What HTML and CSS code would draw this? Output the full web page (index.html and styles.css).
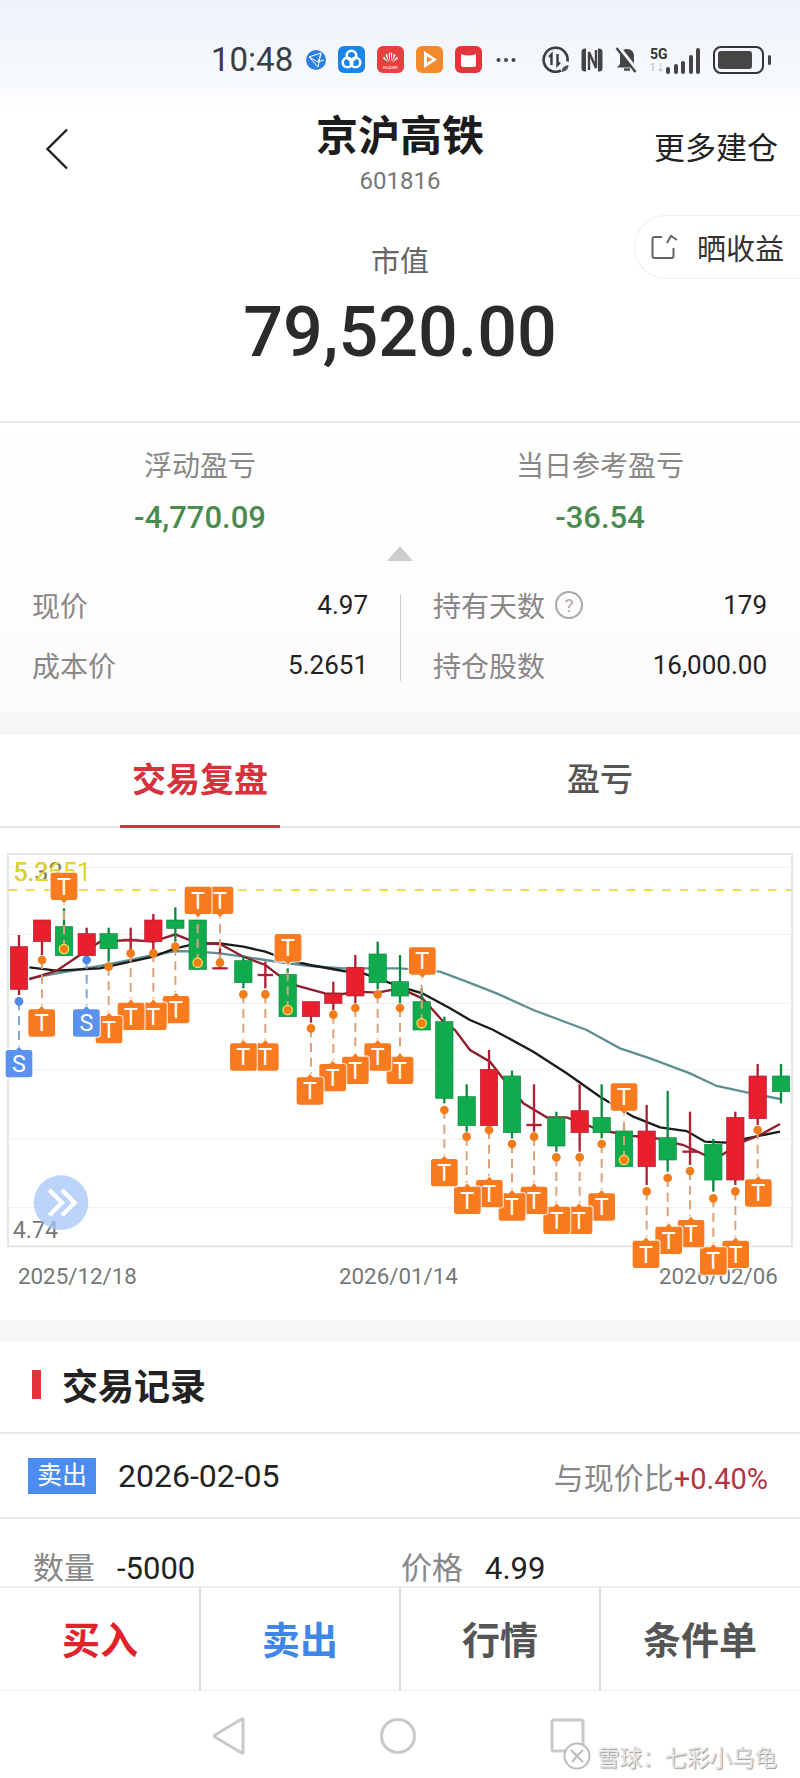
FILE: index.html
```html
<!DOCTYPE html>
<html lang="zh-CN">
<head>
    <meta charset="UTF-8">
    <meta name="viewport" content="width=device-width, initial-scale=1.0">
    <title>京沪高铁</title>
    <link rel="stylesheet" href="styles.css">
</head>
<body>
<div class="page">
    <div class="status">
        <span class="time">10:48</span>
        <div class="status-apps">
            <svg width="20" height="20" viewBox="0 0 20 20"><circle cx="10" cy="10" r="10" fill="#2f7fe0"/><path d="M3 7l12-4-3 14zM3 7l9 5 3-9M12 12l6-2" fill="none" stroke="#fff" stroke-width="1"/></svg>
            <svg width="27" height="27" viewBox="0 0 27 27"><rect width="27" height="27" rx="6" fill="#1a84e8"/><g fill="none" stroke="#fff" stroke-width="2.6"><circle cx="13.5" cy="9.5" r="4.8"/><circle cx="9.5" cy="16.5" r="4.8"/><circle cx="17.5" cy="16.5" r="4.8"/></g></svg>
            <svg width="27" height="27" viewBox="0 0 27 27"><rect width="27" height="27" rx="6" fill="#e8403f"/><g fill="#fff"><path d="M13 16l-1.4-8 1.4-2zM14 16l1.4-8-1.4-2zM12 16l-3.6-6.5 1.6-2zM15 16l3.6-6.5-1.6-2zM11.500 16.500l-5.500-4 1-2zM15.500 16.500l5.500-4-1-2z"/><text x="13.500" y="23" class="mini-logo">HUAWEI</text></g></svg>
            <svg width="27" height="27" viewBox="0 0 27 27"><rect width="27" height="27" rx="6" fill="#f58a2c"/><path d="M8 5l13 8.500-13 8.500z" fill="#fff"/><path d="M11 10.500l5.500 3-5.500 3z" fill="#f58a2c"/></svg>
            <svg width="27" height="27" viewBox="0 0 27 27"><rect width="27" height="27" rx="6" fill="#e6343c"/><path d="M6 8q7.500 3 15 0v11q0 2-2 2h-11q-2 0-2-2z" fill="#fff"/></svg>
            <svg class="dots" width="20" height="6" viewBox="0 0 20 6"><g fill="#444"><circle cx="2.500" cy="3" r="2"/><circle cx="10" cy="3" r="2"/><circle cx="17.500" cy="3" r="2"/></g></svg>
        </div>
        <div class="status-sys">
            <svg width="27" height="27" viewBox="0 0 27 27"><path d="M19 24.500a12 12 0 1 1 6.500-9" fill="none" stroke="#3c3c3c" stroke-width="2.600"/><path d="M9.500 19V8.500L7 11M15.500 8v11l2.500-2.500" fill="none" stroke="#3c3c3c" stroke-width="2.400"/><path d="M19.500 26q0-6 7-7q0 6-7 7z" fill="#555"/></svg>
            <svg width="24" height="26" viewBox="0 0 24 26"><path d="M6 1.500h-1q-3.500 0-3.500 3.500v16q0 3.500 3.500 3.500h1zM18 1.500h1q3.500 0 3.500 3.500v16q0 3.500-3.500 3.500h-1z" fill="#444"/><path d="M9 23V5l7 16V3" fill="none" stroke="#444" stroke-width="2.400"/></svg>
            <svg width="24" height="27" viewBox="0 0 24 27"><path d="M12 3q-7 0-7 8v7l-3 3.500h20l-3-3.500v-7q0-8-7-8z" fill="#444"/><path d="M9 23.500h6" stroke="#444" stroke-width="2.400"/><path d="M3 1l19 24" stroke="#f5f8fd" stroke-width="4.500"/><path d="M1.500 2l19 24" stroke="#444" stroke-width="2.400"/></svg>
            <div class="signal">
                <div class="signal-net"><span class="net-5g">5G</span><span class="net-arrows">1↓</span></div>
                <div class="signal-bars">
                    <i class="bar-1"></i><i class="bar-2"></i><i class="bar-3"></i><i class="bar-4"></i><i class="bar-5"></i>
                </div>
            </div>
            <div class="battery"><div class="battery-fill"></div></div>
        </div>
    </div>

    <div class="nav">
        <div class="back">
            <svg width="24" height="42" viewBox="0 0 24 42"><path d="M22 1.500L2.500 21 22 40.500" fill="none" stroke="#222" stroke-width="2.400"/></svg>
        </div>
        <div class="nav-title">
            <h1>京沪高铁</h1>
            <p>601816</p>
        </div>
        <div class="nav-more">更多建仓</div>
    </div>

    <div class="hero">
        <div class="share">
            <svg width="28" height="26" viewBox="0 0 28 26"><path d="M11 3H3.500q-2 0-2 2v17q0 2 2 2h17q2 0 2-2v-8M16 9l4-7 6 4" fill="none" stroke="#666" stroke-width="2"/></svg>
            <span>晒收益</span>
        </div>
        <div class="hero-label">市值</div>
        <div class="hero-value">79,520.00</div>
    </div>

    <div class="stats">
        <div class="summary">
            <div>
                <div class="summary-label">浮动盈亏</div>
                <div class="summary-value">-4,770.09</div>
            </div>
            <div>
                <div class="summary-label">当日参考盈亏</div>
                <div class="summary-value">-36.54</div>
            </div>
        </div>
        <div class="caret"></div>
        <div class="details">
            <div class="detail-col">
                <div class="detail"><span class="detail-label">现价</span><span class="detail-value">4.97</span></div>
                <div class="detail"><span class="detail-label">成本价</span><span class="detail-value">5.2651</span></div>
            </div>
            <div class="detail-col detail-col-right">
                <div class="detail"><span class="detail-label">持有天数<b class="help">?</b></span><span class="detail-value">179</span></div>
                <div class="detail"><span class="detail-label">持仓股数</span><span class="detail-value">16,000.00</span></div>
            </div>
        </div>
    </div>

    <div class="gap"></div>

    <div class="tabs">
        <div class="tab"><span class="tab-on">交易复盘</span></div>
        <div class="tab"><span>盈亏</span></div>
    </div>

    <div class="chart" id="chart"></div>

    <div class="gap gap-thin"></div>

    <div class="records">
        <div class="records-title"><i></i><h2>交易记录</h2></div>
        <div class="record-head">
            <span class="badge">卖出</span>
            <span class="record-date">2026-02-05</span>
            <span class="record-compare">与现价比<em>+0.40%</em></span>
        </div>
        <div class="record-body">
            <div class="record-cell"><span>数量</span><b>-5000</b></div>
            <div class="record-cell"><span>价格</span><b>4.99</b></div>
        </div>
    </div>

    <div class="footer">
        <div class="actions">
            <div class="action action-buy">买入</div>
            <div class="action action-sell">卖出</div>
            <div class="action">行情</div>
            <div class="action">条件单</div>
        </div>
        <div class="sysnav">
            <svg width="34" height="38" viewBox="0 0 34 38"><path d="M31 2.500v33q0 1-1.500.500L3 20q-1.500-1 0-2L29.500 2q1.500-.500 1.500.500z" fill="none" stroke="#c9c9c9" stroke-width="3"/></svg>
            <svg width="36" height="38" viewBox="0 0 36 38"><circle cx="18" cy="19" r="16.500" fill="none" stroke="#c9c9c9" stroke-width="3"/></svg>
            <svg width="36" height="36" viewBox="0 0 36 36"><rect x="2" y="2" width="31" height="31" rx="2" fill="none" stroke="#c9c9c9" stroke-width="3"/></svg>
        </div>
        <div class="watermark">
            <svg width="28" height="28" viewBox="0 0 28 28"><circle cx="14" cy="14" r="12.500" fill="#fff" stroke="#bbb" stroke-width="2"/><path d="M8 8l6 6-5 6M14 14l6 6M20 8l-6 6" fill="none" stroke="#bbb" stroke-width="2"/></svg>
            <span>雪球：七彩小乌龟</span>
        </div>
    </div>
</div>
<script src="chart.js"></script>
</body>
</html>
```

FILE: styles.css
```css
* {
    box-sizing: border-box;
}
body {
    margin: 0;
    font-family: Roboto, "Noto Sans CJK SC", sans-serif;
    color: #222;
    background-color: #fff;
}
h1, h2, p {
    margin: 0;
}
.page {
    position: relative;
    width: 800px;
    height: 1778px;
    overflow: hidden;
}

/* status bar */
.status {
    display: flex;
    align-items: center;
    height: 112px;
    padding: 7px 31px 0 211px;
    background: linear-gradient(#eef3fa, #f7fafe 75%, #fff);
}
.time {
    font-size: 33px;
    color: #3a3d42;
    width: 95px;
}
.status-apps {
    display: flex;
    align-items: center;
    gap: 12px;
}
.status-apps .dots {
    margin-left: 2px;
}
.status-sys {
    display: flex;
    align-items: center;
    gap: 11px;
    margin-left: auto;
}
.mini-logo {
    font-size: 4px;
    text-anchor: middle;
}
.signal {
    display: flex;
    align-items: flex-end;
    width: 52px;
    height: 28px;
    position: relative;
}
.signal-net {
    display: flex;
    flex-direction: column;
    line-height: 13px;
    width: 18px;
}
.net-5g {
    font-size: 14px;
    font-weight: 700;
    color: #333;
}
.net-arrows {
    font-size: 10px;
    color: #bbb;
}
.signal-bars {
    display: flex;
    align-items: flex-end;
    gap: 3.500px;
    margin-left: -2px;
}
.signal-bars i {
    width: 4px;
    border-radius: 2px;
    background-color: #444;
}
.bar-1 { height: 7px; }
.bar-2 { height: 10px; }
.bar-3 { height: 13px; }
.bar-4 { height: 19px; }
.bar-5 { height: 26px; }
.battery {
    position: relative;
    width: 51px;
    height: 28px;
    padding: 3px 10px 3px 3px;
    border: 2px solid #333;
    border-radius: 8px;
    margin-right: 5px;
}
.battery::after {
    content: "";
    position: absolute;
    right: -9px;
    top: 7px;
    width: 3px;
    height: 10px;
    border-radius: 2px;
    background-color: #444;
}
.battery-fill {
    height: 100%;
    border-radius: 3px;
    background-color: #464646;
}

/* title */
.nav {
    display: grid;
    grid-template-columns: 1fr auto 1fr;
    height: 87px;
}
.back {
    padding: 16px 0 0 45px;
}
.nav-title {
    text-align: center;
}
.nav-title h1 {
    font-size: 42px;
    line-height: 50px;
    font-weight: 700;
    color: #1c1c1c;
}
.nav-title p {
    font-size: 24px;
    line-height: 39px;
    color: #777;
}
.nav-more {
    font-size: 31px;
    line-height: 40px;
    padding-top: 17px;
    padding-right: 22px;
    text-align: right;
}

/* market value */
.hero {
    position: relative;
    height: 224px;
    padding-top: 43px;
    text-align: center;
    border-bottom: 2px solid #e8e8e8;
}
.share {
    position: absolute;
    top: 16px;
    right: 0;
    display: flex;
    align-items: center;
    gap: 18px;
    width: 166px;
    height: 64px;
    padding-left: 16px;
    border: 1px solid #eee;
    border-right: none;
    border-radius: 32px 0 0 32px;
    font-size: 29px;
    color: #333;
    white-space: nowrap;
}
.hero-label {
    font-size: 29px;
    line-height: 40px;
    color: #666;
}
.hero-value {
    margin-top: 10px;
    font-size: 70px;
    line-height: 80px;
    font-weight: 500;
    color: #2b2b2b;
}

/* profit block */
.stats {
    height: 290px;
    padding-top: 26px;
    background: linear-gradient(#fff, #fdfafb);
}
.summary {
    display: grid;
    grid-template-columns: 1fr 1fr;
    text-align: center;
}
.summary-label {
    font-size: 28px;
    line-height: 36px;
    color: #888;
}
.summary-value {
    margin-top: 15px;
    font-size: 31px;
    line-height: 36px;
    font-weight: 500;
    color: #4a8c4f;
}
.caret {
    width: 0;
    height: 0;
    margin: 10px auto 0;
    border-left: 13px solid transparent;
    border-right: 13px solid transparent;
    border-bottom: 15px solid #ccc;
}
.details {
    display: grid;
    grid-template-columns: 1fr 1fr;
    margin-top: 33px;
}
.detail-col {
    display: flex;
    flex-direction: column;
    gap: 38px;
    padding: 0 32px 5px 32px;
}
.detail-col-right {
    padding-left: 32px;
    padding-right: 33px;
    border-left: 1px solid #ccc;
}
.detail {
    display: flex;
    align-items: center;
    justify-content: space-between;
    height: 22px;
}
.detail-label {
    display: flex;
    align-items: center;
    font-size: 28px;
    color: #888;
}
.detail-value {
    font-size: 26px;
    color: #222;
}
.help {
    display: inline-flex;
    align-items: center;
    justify-content: center;
    width: 28px;
    height: 28px;
    margin-left: 10px;
    border: 2px solid #aaa;
    border-radius: 50%;
    font-size: 19px;
    font-weight: 400;
    color: #aaa;
}
.gap {
    height: 22px;
    background-color: #f6f6f6;
}
.gap-thin {
    height: 21px;
}

/* tabs */
.tabs {
    display: flex;
    height: 93px;
    border-bottom: 2px solid #e8e8e8;
}
.tab {
    flex: 1;
    display: flex;
    justify-content: center;
    font-size: 33px;
    font-weight: 500;
    color: #555;
}
.tab span {
    line-height: 90px;
}
.tab .tab-on {
    width: 160px;
    height: 93px;
    font-size: 34px;
    text-align: center;
    font-weight: 700;
    color: #d5323b;
    border-bottom: 3px solid #d0343c;
}

/* chart */
.chart {
    height: 492px;
    padding-top: 12px;
}
.chart svg {
    display: block;
}
.chart text {
    font-family: Roboto, sans-serif;
}

/* trade records */
.records-title {
    display: flex;
    align-items: center;
    gap: 21px;
    height: 93px;
    padding: 0 0 5px 32px;
    border-bottom: 2px solid #e8e8e8;
}
.records-title i {
    width: 9px;
    height: 29px;
    background-color: #e5333b;
}
.records-title h2 {
    font-size: 36px;
    font-weight: 700;
    color: #222;
}
.record-head {
    display: flex;
    align-items: center;
    height: 85px;
    padding: 0 32px 0 28px;
    border-bottom: 2px solid #e8e8e8;
}
.badge {
    width: 68px;
    height: 36px;
    margin-right: 22px;
    background-color: #4a8cf0;
    color: #fff;
    font-size: 25px;
    line-height: 35px;
    text-align: center;
}
.record-date {
    font-size: 32px;
    color: #222;
}
.record-compare {
    margin-left: auto;
    font-size: 30px;
    color: #888;
}
.record-compare em {
    font-size: 29px;
    font-style: normal;
    color: #b5323e;
}
.record-body {
    display: grid;
    grid-template-columns: 1fr 1fr;
    padding-top: 30px;
}
.record-cell {
    display: flex;
    align-items: center;
    gap: 22px;
    padding-left: 33px;
    font-size: 31px;
    line-height: 40px;
}
.record-cell:last-child {
    padding-left: 1px;
}
.record-cell span {
    color: #888;
}
.record-cell b {
    font-weight: 400;
}

.footer {
    position: absolute;
    left: 0;
    right: 0;
    bottom: 0;
    height: 192px;
    background-color: #fff;
}
.actions {
    display: flex;
    height: 105px;
    padding-bottom: 4px;
    border-top: 2px solid #eee;
    border-bottom: 1px solid #eee;
}
.action {
    position: relative;
    flex: 1;
    display: flex;
    align-items: center;
    justify-content: center;
    font-size: 38px;
    font-weight: 700;
    color: #555;
}
.action + .action::before {
    content: "";
    position: absolute;
    left: -1px;
    top: 0;
    bottom: -4px;
    width: 2px;
    background-color: #ddd;
}
.action-buy {
    color: #e0222b;
}
.action-sell {
    color: #3f86e8;
}
.sysnav {
    display: flex;
    justify-content: space-between;
    align-items: center;
    padding: 26px 214px 0 212px;
}
.watermark {
    position: absolute;
    left: 563px;
    top: 154px;
    display: flex;
    align-items: center;
    gap: 6px;
    font-size: 22.500px;
    color: #e6e6e6;
    text-shadow: 1px 1px 1px #999;
    white-space: nowrap;
}
```

FILE: chart.js
```js
// units are 1/3 px, the svg is 800 wide
// x, colour, high, body top, body bottom, low, marker kind, marker y, label x, label y
const candles = [
    [57, "r", 285, 320, 448, 465, "S", 484, 57, 630],
    [126, "r", 240, 240, 305, 345, "T", 360, 125, 508],
    [192, "g", 205, 260, 347, 347, "R", 327, 192, 98],
    [260, "r", 263, 281, 347, 347, "S", 360, 259, 508],
    [326, "g", 263, 281, 326, 365, "T", 380, 327, 528],
    [392, "r", 263, 300, 300, 330, "T", 340, 393, 488],
    [460, "r", 222, 240, 305, 330, "T", 340, 460, 488],
    [526, "g", 202, 240, 265, 305, "T", 320, 528, 468],
    [593, "g", 240, 240, 388, 388, "R", 368, 594, 140],
    [660, "r", 325, 385, 385, 385, "T", 368, 660, 140],
    [730, "g", 345, 362, 428, 445, "T", 463, 730, 610],
    [796, "r", 365, 405, 405, 445, "T", 463, 796, 610],
    [863, "g", 385, 403, 530, 530, "R", 510, 864, 282],
    [933, "r", 485, 485, 530, 548, "T", 565, 930, 712],
    [1000, "r", 425, 462, 490, 510, "T", 524, 998, 672],
    [1066, "r", 345, 382, 468, 490, "T", 504, 1066, 650],
    [1133, "g", 305, 342, 428, 448, "T", 463, 1133, 610],
    [1200, "g", 345, 425, 468, 490, "T", 504, 1200, 650],
    [1265, "g", 445, 485, 570, 570, "R", 550, 1267, 322],
    [1333, "g", 530, 545, 775, 790, "T", 810, 1333, 957],
    [1400, "g", 733, 770, 857, 875, "T", 890, 1402, 1040],
    [1467, "r", 630, 688, 857, 857, "T", 870, 1468, 1020],
    [1536, "g", 692, 708, 878, 895, "T", 912, 1536, 1060],
    [1602, "r", 733, 855, 855, 875, "T", 890, 1602, 1040],
    [1669, "g", 815, 833, 918, 935, "T", 952, 1670, 1100],
    [1739, "r", 733, 812, 878, 935, "T", 952, 1737, 1100],
    [1805, "g", 733, 832, 878, 895, "T", 912, 1805, 1060],
    [1872, "g", 855, 873, 980, 980, "R", 960, 1872, 730],
    [1940, "r", 795, 873, 980, 1035, "T", 1054, 1938, 1202],
    [2003, "g", 753, 893, 960, 995, "T", 1014, 2006, 1160],
    [2070, "r", 815, 935, 935, 975, "T", 993, 2073, 1140],
    [2140, "g", 897, 913, 1020, 1055, "T", 1075, 2140, 1222],
    [2206, "r", 815, 832, 1020, 1035, "T", 1054, 2207, 1202],
    [2273, "r", 672, 708, 836, 855, "T", 870, 2275, 1018],
    [2343, "g", 672, 708, 755, 790]
];

const ma5 = "88,418 170,392 240,345 300,305 392,300 460,305 526,283 593,310 660,312 730,350 796,375 835,405 890,437 975,460 1030,462 1066,455 1133,458 1200,445 1267,475 1330,545 1365,570 1410,630 1470,665 1520,730 1570,790 1640,832 1700,832 1800,870 1900,888 1970,895 2050,915 2115,945 2165,945 2230,905 2280,885 2340,852";
const ma10 = "88,382 170,392 300,385 392,365 460,350 526,325 593,310 660,310 730,320 796,335 863,360 930,375 1030,393 1090,400 1200,440 1267,460 1350,505 1410,540 1480,570 1600,635 1700,700 1800,770 1900,830 1980,862 2060,873 2115,905 2175,908 2240,895 2340,875";
const ma20 = "88,415 170,400 300,378 392,360 460,345 526,333 593,335 660,340 730,350 796,360 863,370 930,378 1030,385 1133,385 1200,385 1320,395 1400,425 1490,460 1600,510 1680,540 1760,570 1860,625 1950,655 2070,700 2150,738 2240,757 2340,777";

function labelPath(x, y, above) {
    const l = x - 40, r = x + 40, b = y + 82;
    if (above) {
        return `M${l + 7} ${y}H${r - 7}Q${r} ${y} ${r} ${y + 7}V${b - 7}Q${r} ${b} ${r - 7} ${b}H${x + 9}L${x} ${b + 10}L${x - 9} ${b}H${l + 7}Q${l} ${b} ${l} ${b - 7}V${y + 7}Q${l} ${y} ${l + 7} ${y}Z`;
    }
    return `M${l + 7} ${y}H${x - 9}L${x} ${y - 10}L${x + 9} ${y}H${r - 7}Q${r} ${y} ${r} ${y + 7}V${b - 7}Q${r} ${b} ${r - 7} ${b}H${l + 7}Q${l} ${b} ${l} ${b - 7}V${y + 7}Q${l} ${y} ${l + 7} ${y}Z`;
}

let grid = "";
[82, 283, 490, 690, 897, 1103].forEach(y => {
    grid += `<line x1="24" x2="2375" y1="${y}" y2="${y}" stroke="#eee" stroke-width="3"/>`;
});

let bars = "";
candles.forEach(c => {
    const [x, col, hi, top, bot, lo] = c;
    const fill = col === "r" ? "#e8202e" : "#10ab4c";
    const dark = col === "r" ? "#b01f33" : "#0d8a42";
    bars += `<line x1="${x}" x2="${x}" y1="${hi}" y2="${lo}" stroke="${dark}" stroke-width="7"/>`;
    if (top === bot) {
        bars += `<line x1="${x - 23}" x2="${x + 23}" y1="${top}" y2="${top}" stroke="${dark}" stroke-width="7"/>`;
    } else {
        bars += `<rect x="${x - 26}" y="${top}" width="52" height="${bot - top}" fill="${fill}" stroke="${dark}" stroke-width="2"/>`;
    }
});

let links = "", labels = "";
candles.forEach(c => {
    const [x, , , , , , kind, my, lx, ly] = c;
    if (!kind) return;
    const sell = kind === "S";
    const above = ly < my;
    const edge = above ? ly + 92 : ly - 10;
    links += `<line x1="${x}" x2="${x}" y1="${my}" y2="${edge}" stroke="${sell ? "#7fa6d8" : "#dda27a"}" stroke-width="6" stroke-dasharray="27 17"/>`;
    if (kind === "R") {
        links += `<circle cx="${x}" cy="${my}" r="14" fill="#f07c1a" stroke="#f3e64e" stroke-width="4"/>`;
    } else {
        links += `<circle cx="${x}" cy="${my}" r="13" fill="${sell ? "#4c8ae6" : "#f07c1a"}"/>`;
    }
});
// earlier labels sit on top of later ones
candles.slice().reverse().forEach(c => {
    const [, , , , , , kind, my, lx, ly] = c;
    if (!kind) return;
    const sell = kind === "S";
    labels += `<path d="${labelPath(lx, ly, ly < my)}" fill="${sell ? "#5a93ef" : "#f97a1f"}" stroke="#fff" stroke-opacity=".7" stroke-width="8" paint-order="stroke"/>`;
    labels += `<text x="${lx}" y="${ly + 66}" font-size="70" fill="#fff" text-anchor="middle">${sell ? "S" : "T"}</text>`;
});

document.getElementById("chart").innerHTML = `
<svg width="800" height="480" viewBox="0 0 2400 1440">
    <rect x="24" y="42" width="2352" height="1177" fill="#fff" stroke="#e2e2e2" stroke-width="5"/>
    ${grid}
    <line x1="25" x2="2375" y1="150" y2="150" stroke="#e9d41c" stroke-width="5" stroke-dasharray="26 27"/>
    <text x="40" y="122" font-size="76" fill="#7d7d55">5.32</text>
    <text x="40" y="122" font-size="76" fill="#e3d52a">5.2651</text>
    <text x="38" y="1193" font-size="70" fill="#777">4.74</text>
    <text x="54" y="1332" font-size="67" fill="#777">2025/12/18</text>
    <text x="1017" y="1332" font-size="67" fill="#777">2026/01/14</text>
    <text x="1977" y="1332" font-size="67" fill="#777">2026/02/06</text>
    <polyline points="${ma20}" fill="none" stroke="#5f8f94" stroke-width="7"/>
    <polyline points="${ma10}" fill="none" stroke="#1b1b1b" stroke-width="7"/>
    <polyline points="${ma5}" fill="none" stroke="#8e1f2c" stroke-width="7"/>
    ${bars}
    ${links}
    ${labels}
    <circle cx="183" cy="1088" r="82" fill="#a6c6f7" fill-opacity=".75"/>
    <path d="M148 1050l38 38-38 38M186 1050l38 38-38 38" fill="none" stroke="#fff" stroke-width="13"/>
</svg>`;
```
